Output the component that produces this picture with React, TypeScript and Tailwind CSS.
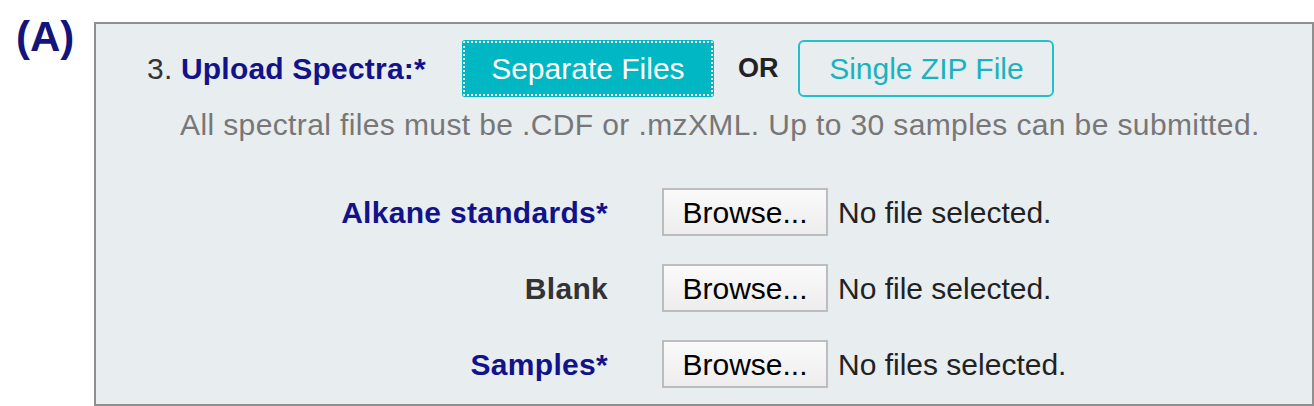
export default function App() {
  const rows = [
    { label: "Alkane standards*", color: "text-[#12128a]", status: "No file selected." },
    { label: "Blank", color: "text-[#333333]", status: "No file selected." },
    { label: "Samples*", color: "text-[#12128a]", status: "No files selected." },
  ];

  return (
    <div className="w-[1314px] h-[406px] bg-white flex font-['Liberation_Sans',Arial,sans-serif]">
      <div className="w-[94px] pl-[16px] pt-[16px] text-[42px] font-bold text-[#14147a] leading-none">
        (A)
      </div>
      <div className="mt-[22px] w-[1220px] h-[384px] border-2 border-[#8f8f8f] bg-[#e8edf0]">
        <div className="flex items-center pl-[51px] pt-[16px]">
          <span className="text-[30px] leading-[34px] tracking-[0.2px] text-[#333333]">
            3. <span className="font-bold text-[#12128a]">Upload Spectra:*</span>
          </span>
          <button className="ml-[36px] w-[252px] h-[57px] rounded-[3px] bg-[#00b7c3] text-white text-[30px] outline-2 outline-dotted outline-white -outline-offset-[3px]">
            Separate Files
          </button>
          <span className="ml-[24px] text-[27px] font-bold text-[#222222]">OR</span>
          <button className="ml-[20px] w-[256px] h-[57px] rounded-[6px] border-2 border-[#22c0cb] text-[#1ab2be] text-[30px]">
            Single ZIP File
          </button>
        </div>
        <p className="mt-[12px] pl-[84px] text-[30px] leading-[32px] tracking-[0.38px] text-[#777777]">
          All spectral files must be .CDF or .mzXML. Up to 30 samples can be submitted.
        </p>
        <div className="mt-[47px] flex flex-col gap-[28px]">
          {rows.map((r) => (
            <div key={r.label} className="flex items-center">
              <div className={`w-[512px] text-right text-[30px] font-bold tracking-[0.3px] ${r.color}`}>{r.label}</div>
              <button className="ml-[54px] w-[166px] h-[48px] border-2 border-[#bdbdbd] bg-gradient-to-b from-[#fafafa] to-[#ededed] text-[30px] text-black">
                Browse...
              </button>
              <span className="ml-[10px] text-[30px] text-[#222222]">{r.status}</span>
            </div>
          ))}
        </div>
      </div>
    </div>
  );
}
